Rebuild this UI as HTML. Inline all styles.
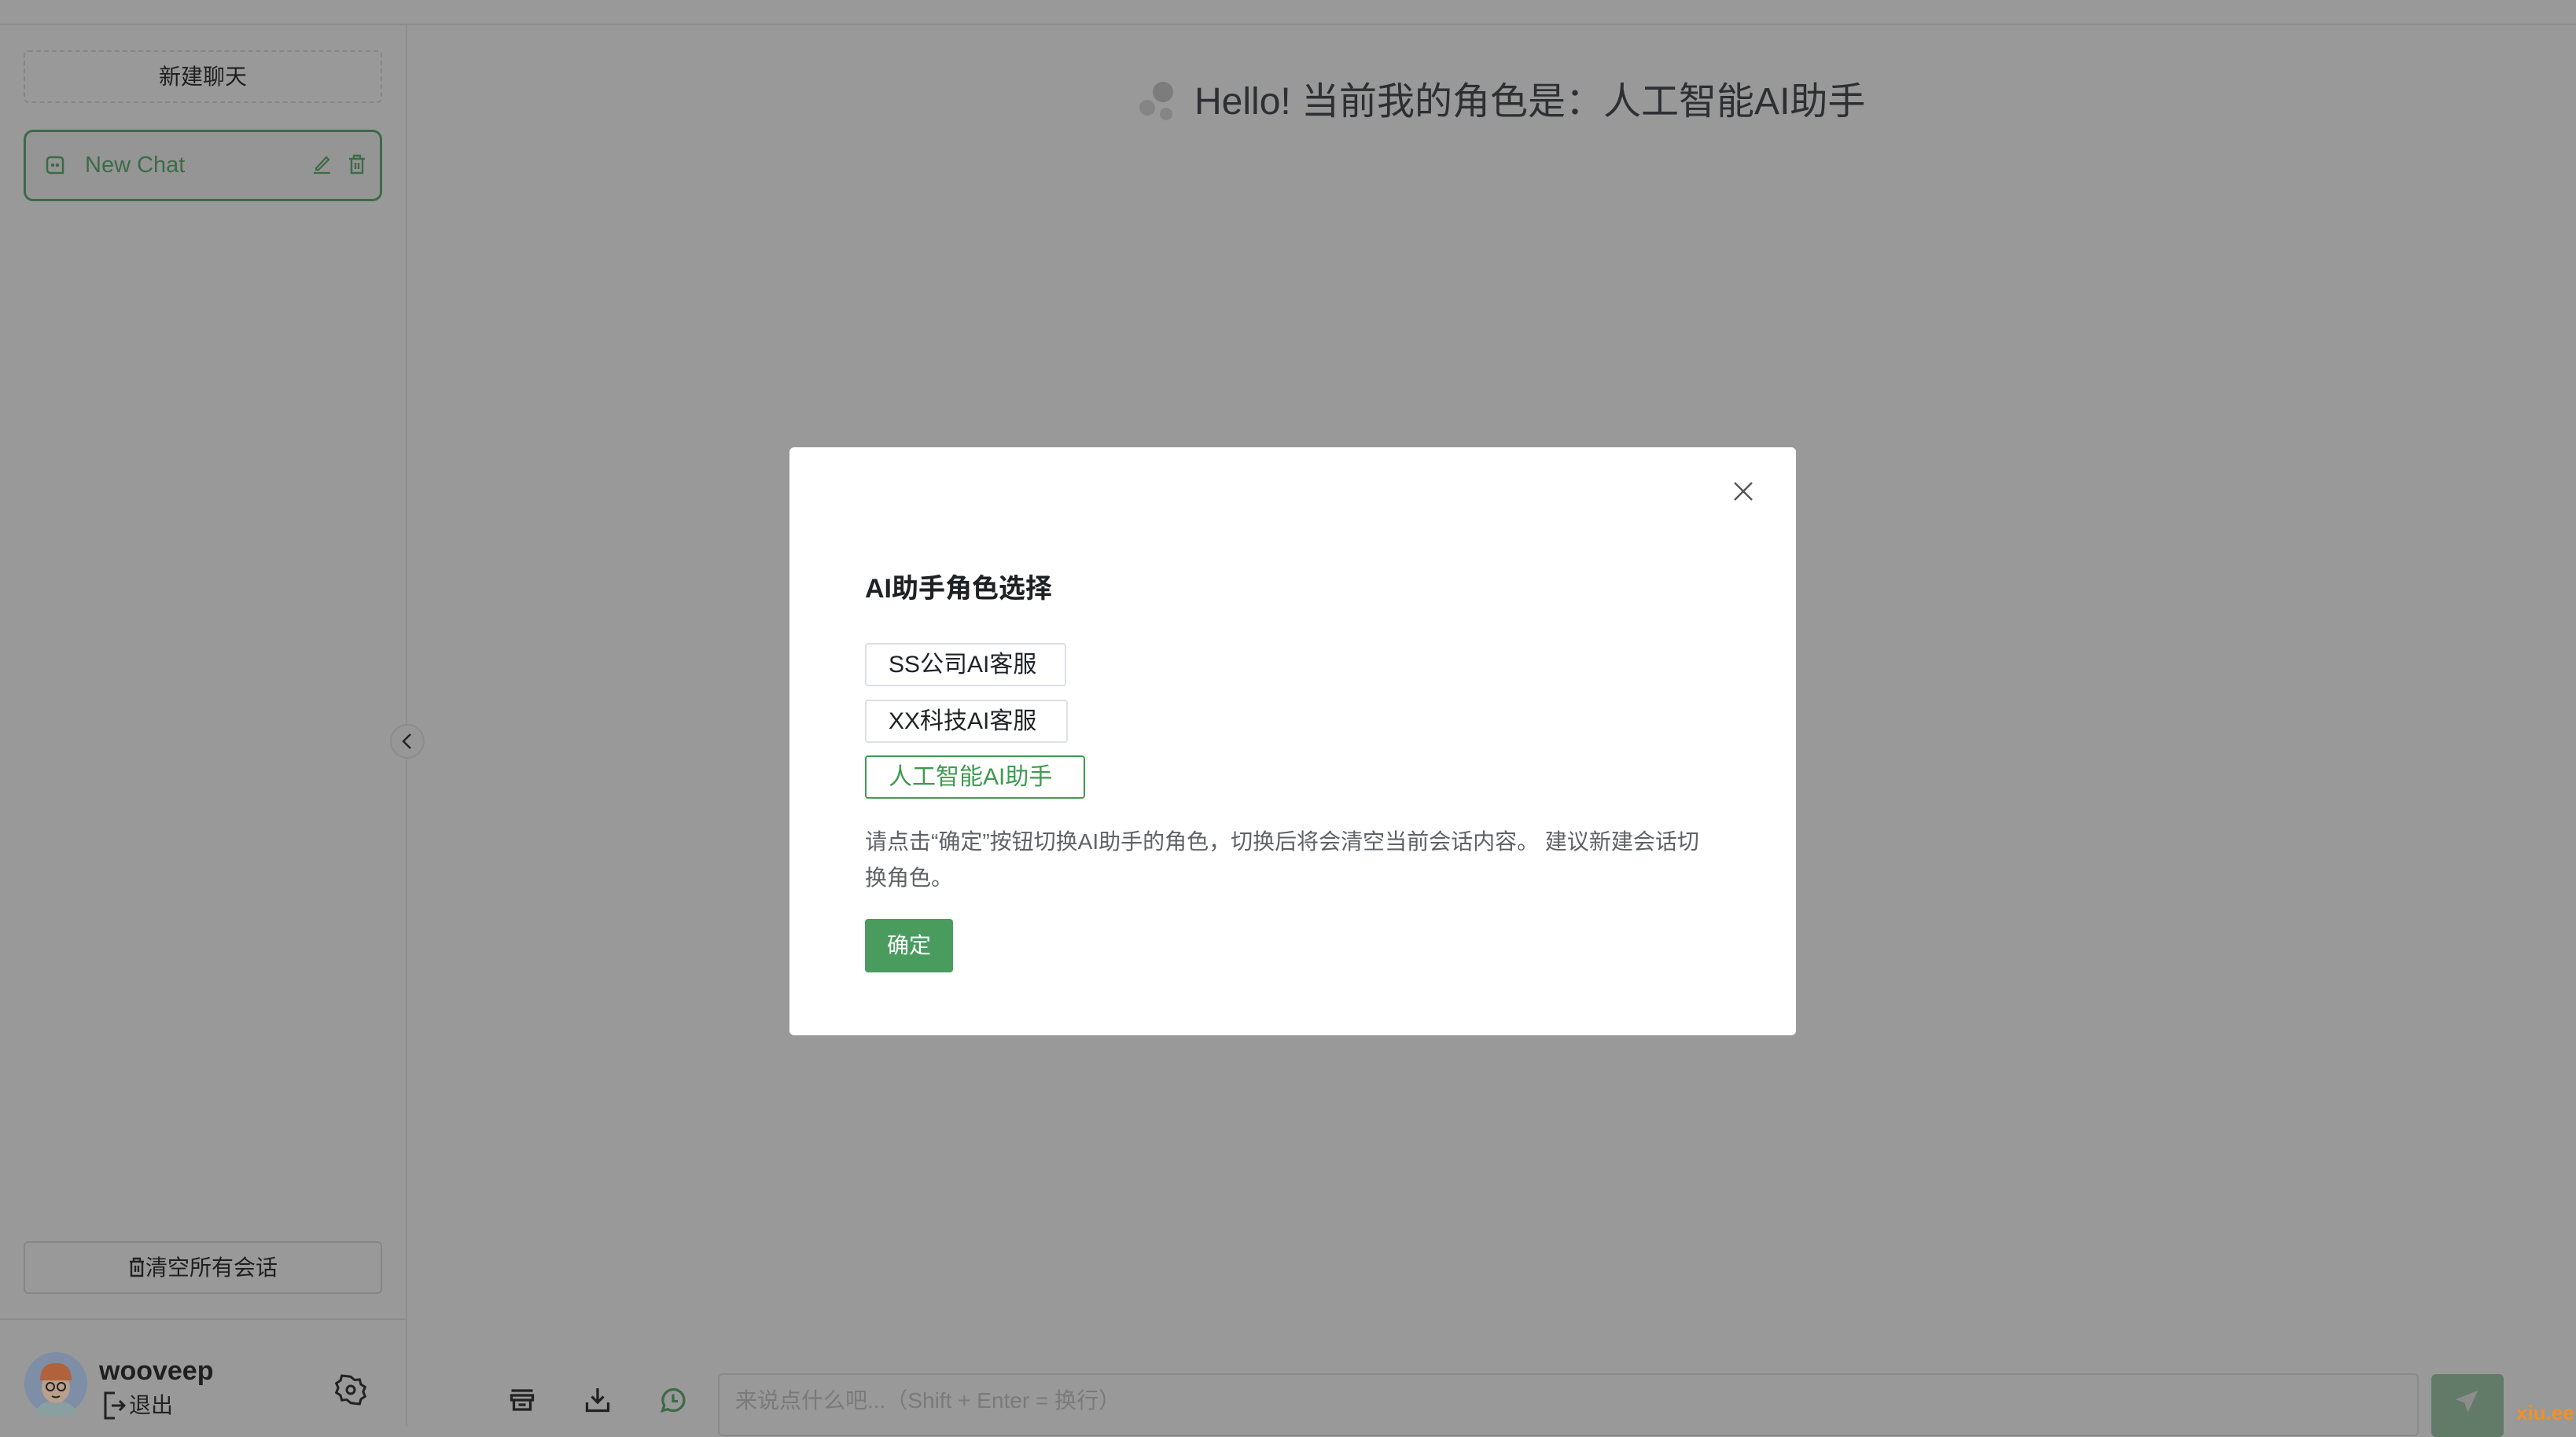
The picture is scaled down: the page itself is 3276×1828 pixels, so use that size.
<!DOCTYPE html>
<html><head><meta charset="utf-8"><style>
*{margin:0;padding:0;box-sizing:border-box}
body{width:3276px;height:1814px;overflow:hidden;background:#999;font-family:"Liberation Sans","Noto Sans CJK SC",sans-serif;position:relative}
.a{position:absolute}
</style></head><body>
<div class="a" style="left:0;top:30px;width:3276px;height:2px;background:#8c8c8c"></div>
<div class="a" style="left:516px;top:31px;width:2px;height:1783px;background:#8e8e8e"></div>
<div class="a" style="left:0;top:1677px;width:517px;height:2px;background:#8c8c8c"></div>

<div class="a" style="left:30px;top:64px;width:456px;height:67px;border:2px dashed #868686;border-radius:6px;color:#1f1f1f;font-size:28px;text-align:center;line-height:63px">新建聊天</div>

<div class="a" style="left:30px;top:165px;width:456px;height:91px;border:3px solid #3d6b47;border-radius:12px;background:#959595"></div>
<svg class="a" style="left:56px;top:196px" width="28" height="28" viewBox="0 0 28 28" fill="none" stroke="#3d6b47" stroke-width="2.5"><path d="M4 8a4 4 0 014-4h12a4 4 0 014 4v16H8a4 4 0 01-4-4z"/><circle cx="11" cy="14" r="1" fill="#3d6b47"/><circle cx="17" cy="14" r="1" fill="#3d6b47"/></svg>
<div class="a" style="left:108px;top:190px;font-size:29px;color:#3d6b47;line-height:40px">New Chat</div>
<svg class="a" style="left:398px;top:196px" width="24" height="26" viewBox="0 0 24 26" fill="none" stroke="#3d6b47" stroke-width="2.2"><path d="M4 18L17 4l3 3L7 20H4z"/><path d="M1 24h21"/></svg>
<svg class="a" style="left:442px;top:196px" width="24" height="26" viewBox="0 0 24 26" fill="none" stroke="#3d6b47" stroke-width="2.4"><path d="M2 6h20M8 6V2h8v4M5 6v18h14V6M10 11v8M14 11v8"/></svg>

<div class="a" style="left:30px;top:1579px;width:456px;height:67px;border:2px solid #868686;border-radius:6px;color:#1f1f1f;font-size:28px;text-align:center;line-height:63px">
<svg style="vertical-align:-3px" width="22" height="26" viewBox="0 0 22 26" fill="none" stroke="#222" stroke-width="2.4"><path d="M2 6h18M7 6V2h8v4M4 6v18h14V6M9 11v8M13 11v8"/></svg>清空所有会话</div>

<svg class="a" style="left:31px;top:1720px" width="80" height="80" viewBox="0 0 80 80"><circle cx="40" cy="40" r="40" fill="#7d8ea6"/><path d="M14 80q2-18 26-18t26 18z" fill="#8aa0a0"/><ellipse cx="40" cy="45" rx="18" ry="20" fill="#b99f8c"/><path d="M20 36q0-22 20-22t20 22z" fill="#b2623a"/><circle cx="33" cy="44" r="5" fill="none" stroke="#222" stroke-width="2"/><circle cx="47" cy="44" r="5" fill="none" stroke="#222" stroke-width="2"/><path d="M35 56q5 3 10 0" stroke="#222" stroke-width="2" fill="none"/></svg>
<div class="a" style="left:126px;top:1722px;font-size:34px;font-weight:bold;color:#1f1f1f;line-height:44px">wooveep</div>
<svg class="a" style="left:132px;top:1770px" width="30" height="36" viewBox="0 0 30 36" fill="none" stroke="#222" stroke-width="3"><path d="M14 2H2v32h12M10 18h16M20 12l6 6-6 6"/></svg>
<div class="a" style="left:164px;top:1768px;font-size:28px;color:#222;line-height:40px">退出</div>
<svg class="a" style="left:426px;top:1748px" width="40" height="40" viewBox="0 0 24 24" fill="none" stroke="#222" stroke-width="1.8"><path d="M12 2l3 2.5 3.8-.4 1 3.7 3.2 2.1-1.5 3.6 1.5 3.5-3.2 2.1-1 3.7-3.8-.4L12 22l-3-2.5-3.8.4-1-3.7L1 14.1l1.5-3.6L1 7l3.2-2.1 1-3.7 3.8.4z"/><circle cx="12" cy="12" r="3"/></svg>

<div class="a" style="left:496px;top:921px;width:44px;height:44px;border-radius:50%;background:#979797;border:2px solid #8c8c8c"></div>
<svg class="a" style="left:506px;top:931px" width="24" height="24" viewBox="0 0 24 24" fill="none" stroke="#222" stroke-width="2.4"><path d="M16 3L7 12l9 9"/></svg>

<svg class="a" style="left:1449px;top:102px" width="48" height="54" viewBox="0 0 48 54"><circle cx="30" cy="15" r="13" fill="#7c7c7c"/><circle cx="10" cy="35" r="10" fill="#858585"/><circle cx="34" cy="43" r="8" fill="#858585"/></svg>
<div class="a" style="left:1519px;top:100px;font-size:48px;color:#2d2f33;line-height:60px;white-space:nowrap">Hello! 当前我的角色是：人工智能AI助手</div>

<svg class="a" style="left:646px;top:1763px" width="36" height="36" viewBox="0 0 24 24" fill="none" stroke="#222" stroke-width="2.2"><path d="M3 4h18M3 8h18v4H3zM5 12v8h14v-8M9 16h6"/></svg>
<svg class="a" style="left:742px;top:1763px" width="36" height="36" viewBox="0 0 24 24" fill="none" stroke="#222" stroke-width="2.2"><path d="M12 2v12M7 9l5 5 5-5M3 14v7h18v-7"/></svg>
<svg class="a" style="left:838px;top:1763px" width="36" height="36" viewBox="0 0 24 24" fill="none" stroke="#3d6b47" stroke-width="2.2"><path d="M3 21l1.5-4.5A9 9 0 1112 21a9 9 0 01-4.5-1.2z"/><path d="M12 7v6h4"/></svg>
<div class="a" style="left:913px;top:1747px;width:2163px;height:80px;border:2px solid #8a8a8a;border-radius:6px"></div>
<div class="a" style="left:935px;top:1762px;font-size:28px;color:#7a7a7a;line-height:40px;white-space:nowrap">来说点什么吧...（Shift + Enter = 换行）</div>
<div class="a" style="left:3092px;top:1748px;width:92px;height:80px;background:#627b68;border-radius:6px"></div>
<svg class="a" style="left:3120px;top:1766px" width="34" height="34" viewBox="0 0 24 24"><path d="M22 2L2 10l8 3 3 9z" fill="#8c8c8c"/></svg>
<div class="a" style="left:3200px;top:1782px;font-size:26px;font-weight:bold;color:#f0902a;line-height:30px">xiu.ee</div>

<div class="a" style="left:1004px;top:569px;width:1280px;height:748px;background:#fff;border-radius:6px"></div>
<svg class="a" style="left:2203px;top:611px" width="28" height="28" viewBox="0 0 28 28" stroke="#555" stroke-width="2.4"><path d="M3 3l22 22M25 3L3 25"/></svg>
<div class="a" style="left:1100px;top:726px;font-size:34px;font-weight:bold;color:#1f2225;line-height:46px">AI助手角色选择</div>
<div class="a" style="left:1100px;top:818px;width:256px;height:55px;border:2px solid #dcdfe6;border-radius:4px;font-size:30px;color:#1f2225;line-height:51px;padding-left:28px">SS公司AI客服</div>
<div class="a" style="left:1100px;top:890px;width:258px;height:55px;border:2px solid #dcdfe6;border-radius:4px;font-size:30px;color:#1f2225;line-height:51px;padding-left:28px">XX科技AI客服</div>
<div class="a" style="left:1100px;top:961px;width:280px;height:55px;border:2px solid #3f9a52;border-radius:4px;font-size:30px;color:#3f9a52;line-height:51px;padding-left:28px">人工智能AI助手</div>
<div class="a" style="left:1100px;top:1048px;width:1080px;font-size:28px;color:#5f6266;line-height:46px">请点击“确定”按钮切换AI助手的角色，切换后将会清空当前会话内容。 建议新建会话切换角色。</div>
<div class="a" style="left:1100px;top:1169px;width:112px;height:68px;background:#4a9c5e;border-radius:4px;color:#fff;font-size:28px;text-align:center;line-height:68px">确定</div>
</body></html>
